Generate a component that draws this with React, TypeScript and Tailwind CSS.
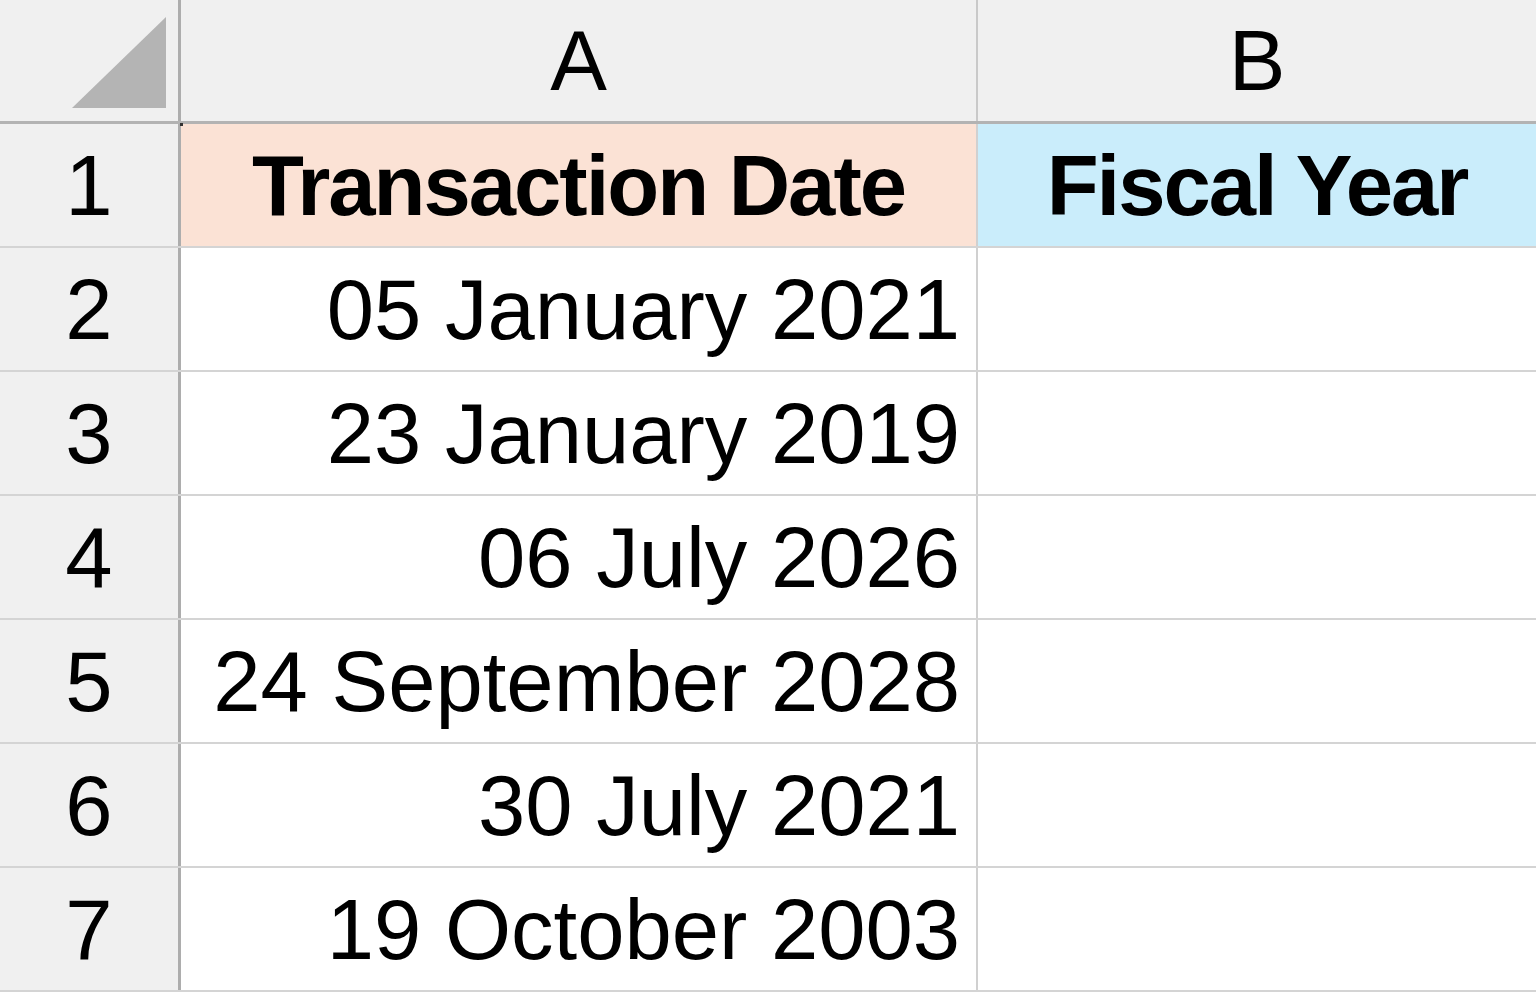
import React from "react";

const rows: string[] = [
  "05 January 2021",
  "23 January 2019",
  "06 July 2026",
  "24 September 2028",
  "30 July 2021",
  "19 October 2003",
];

export default function App() {
  const font = { fontFamily: '"Liberation Sans", Arial, sans-serif' };
  return (
    <div
      className="w-[1536px] h-[994px] overflow-hidden bg-white text-black"
      style={font}
    >
      {/* header row */}
      <div className="flex h-[124px] border-b-[3px] border-[#b3b3b3] bg-[#f0f0f0]">
        <div className="relative w-[181px] shrink-0 border-r-[3px] border-[#adadad]">
          <svg
            className="absolute left-0 top-0"
            width="178"
            height="121"
            viewBox="0 0 178 121"
          >
            <polygon points="72,108 166,108 166,17" fill="#b4b4b4" />
          </svg>
        </div>
        <div className="w-[797px] shrink-0 border-r-2 border-[#c9c9c9] flex items-center justify-center text-[85px] leading-none">
          A
        </div>
        <div className="flex-1 flex items-center justify-center text-[85px] leading-none">
          B
        </div>
      </div>

      {/* row 1 */}
      <div className="flex h-[124px] border-b-2 border-[#d4d4d4]">
        <div className="relative w-[181px] shrink-0 border-r-[3px] border-[#adadad] bg-[#f0f0f0] flex items-center justify-center text-[85px] leading-none">
          1
          <div className="absolute right-[-5px] top-[-1px] w-[3px] h-[3px] bg-[#333]" />
        </div>
        <div className="w-[797px] shrink-0 border-r-2 border-[#d0d0d0] bg-[#fbe2d5] flex items-center justify-center text-[85px] leading-none font-bold tracking-[-2px]">
          Transaction Date
        </div>
        <div className="flex-1 bg-[#caedfb] flex items-center justify-center text-[85px] leading-none font-bold tracking-[-2px]">
          Fiscal Year
        </div>
      </div>

      {rows.map((d, i) => (
        <div key={i} className="flex h-[124px] border-b-2 border-[#d4d4d4]">
          <div className="w-[181px] shrink-0 border-r-[3px] border-[#adadad] bg-[#f0f0f0] flex items-center justify-center text-[85px] leading-none">
            {i + 2}
          </div>
          <div className="w-[797px] shrink-0 border-r-2 border-[#d0d0d0] flex items-center justify-end pr-[16px] text-[85px] leading-none">
            {d}
          </div>
          <div className="flex-1" />
        </div>
      ))}
    </div>
  );
}
